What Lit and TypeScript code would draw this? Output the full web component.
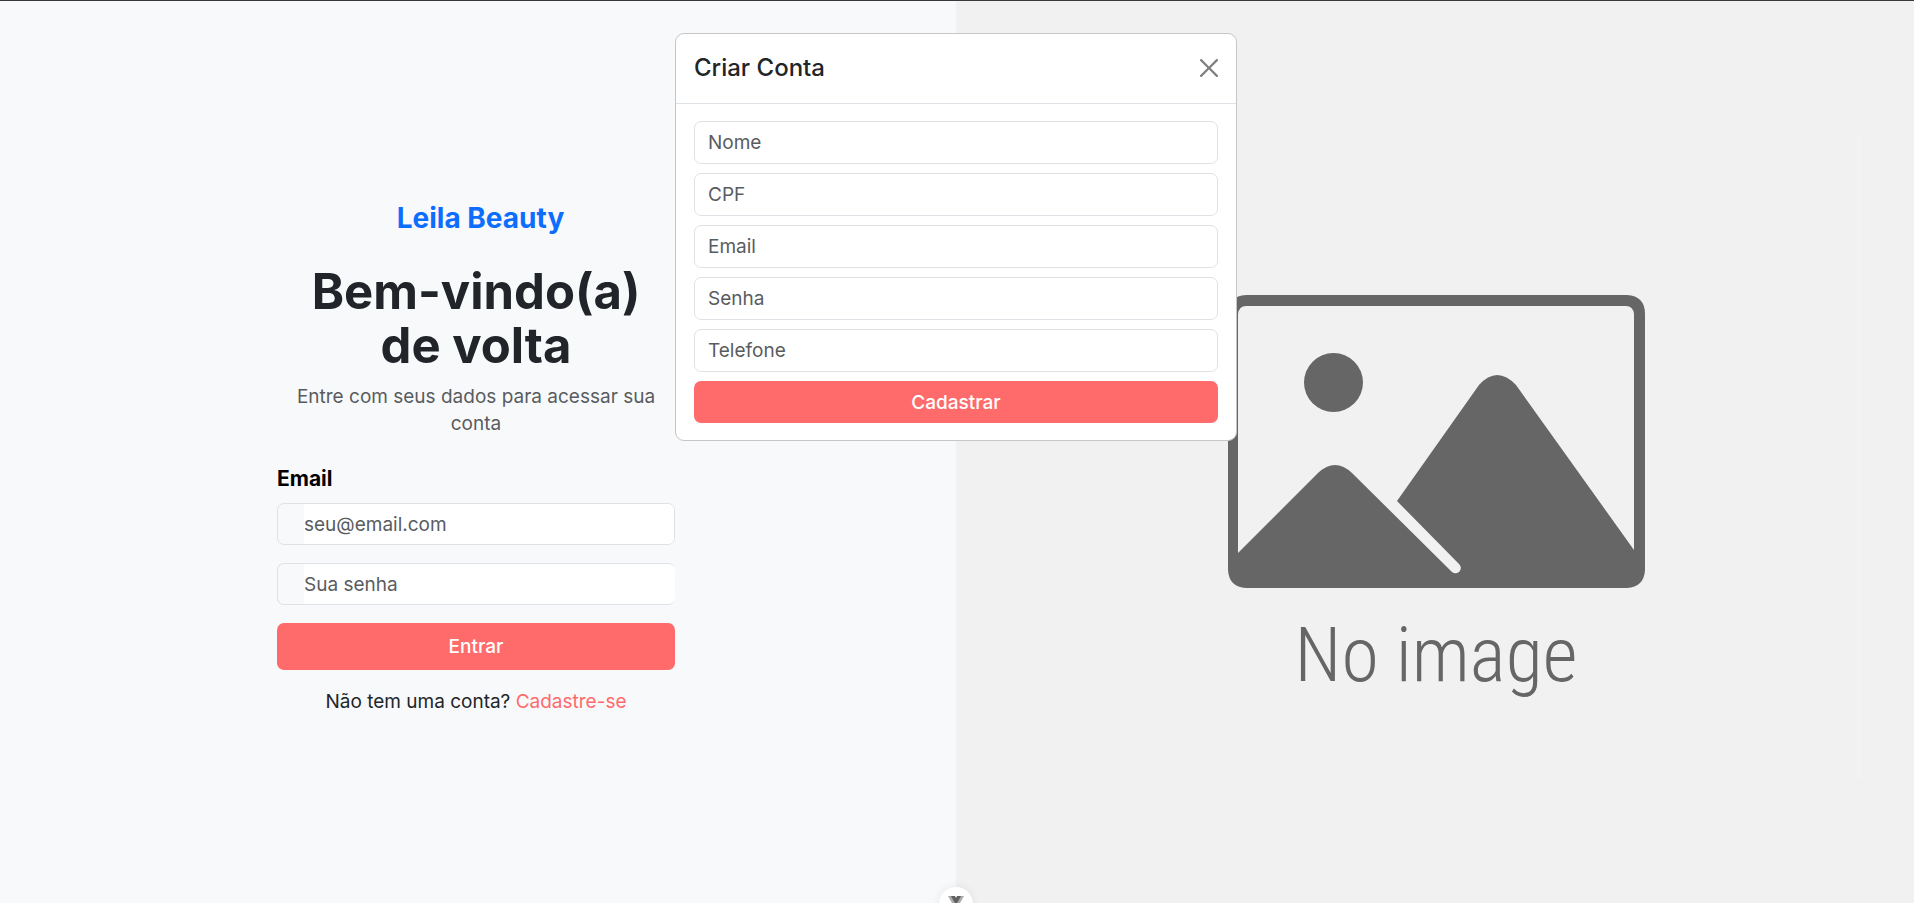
import { LitElement, html, css } from "lit";
import { customElement, state } from "lit/decorators.js";

interface Field {
  name: string;
  label: string;
  type: string;
}

const SIGNUP_FIELDS: Field[] = [
  { name: "nome", label: "Nome", type: "text" },
  { name: "cpf", label: "CPF", type: "text" },
  { name: "email", label: "Email", type: "email" },
  { name: "senha", label: "Senha", type: "password" },
  { name: "telefone", label: "Telefone", type: "tel" },
];

@customElement("no-image")
export class NoImage extends LitElement {
  static styles = css`
    :host {
      display: block;
      background: #f1f1f1;
      overflow: hidden;
    }
    svg {
      display: block;
      width: 100%;
      height: 100%;
    }
    .caption {
      font-family: "Roboto Condensed", "Liberation Sans", sans-serif;
      font-size: 76px;
      font-weight: 300;
      text-anchor: middle;
    }
  `;

  render() {
    return html`
      <svg viewBox="0 0 958 902" preserveAspectRatio="xMidYMid slice" role="img" aria-label="No image">
        <rect x="901" y="136" width="4" height="641" fill="#f3f3f3" />
        <g fill="#666">
          <path
            fill-rule="evenodd"
            d="M290 294H671Q689 295 689 313V569Q688 586 671 587H290Q273 586 272 569V313Q272 295 290 294ZM290 305Q283 305 282 313V552L362 472Q379 456 396 472L496 571A5 5 0 0 0 503 563L441 500L523 384Q541 364 560 384L678 549V313Q677 305 670 305Z"
          />
          <circle cx="377.500" cy="381.500" r="29.500" />
          <text class="caption" x="480" y="680">No image</text>
        </g>
      </svg>
    `;
  }
}

@customElement("signup-dialog")
export class SignupDialog extends LitElement {
  static styles = css`
    :host {
      display: block;
    }
    .dialog {
      box-sizing: border-box;
      background: #fff;
      border: 1px solid #c4c6c8;
      border-radius: 9px;
      overflow: hidden;
    }
    .head {
      display: flex;
      align-items: center;
      justify-content: space-between;
      padding: 17px 18px 19px;
      border-bottom: 1px solid #dee2e6;
    }
    h2 {
      margin: 0;
      font-size: 24px;
      font-weight: 500;
      line-height: 33px;
    }
    .close {
      display: flex;
      padding: 0;
      border: 0;
      background: none;
      color: #808080;
      cursor: pointer;
    }
    .fields {
      display: grid;
      gap: 9px;
      padding: 17px 18px;
    }
    input,
    .submit {
      box-sizing: border-box;
      width: 100%;
      font-family: inherit;
      font-size: 19px;
      border-radius: 7px;
    }
    input {
      height: 43px;
      padding: 0 13px;
      border: 1px solid #dee2e6;
      background: #fff;
      color: #212529;
    }
    input::placeholder {
      color: #595c5f;
      opacity: 1;
    }
    .submit {
      height: 42px;
      padding: 0;
      border: 0;
      background: #ff6b6b;
      color: #fff;
      font-weight: 500;
      cursor: pointer;
    }
  `;

  private close() {
    this.dispatchEvent(new CustomEvent("dismiss"));
  }

  render() {
    return html`
      <section class="dialog" role="dialog" aria-labelledby="title">
        <header class="head">
          <h2 id="title">Criar Conta</h2>
          <button class="close" type="button" aria-label="Fechar" @click=${this.close}>
            <svg width="18" height="18" viewBox="0 0 16 16" fill="currentColor" aria-hidden="true">
              <path
                d="M.293.293a1 1 0 0 1 1.414 0L8 6.586 14.293.293a1 1 0 1 1 1.414 1.414L9.414 8l6.293 6.293a1 1 0 0 1-1.414 1.414L8 9.414l-6.293 6.293a1 1 0 0 1-1.414-1.414L6.586 8 .293 1.707a1 1 0 0 1 0-1.414z"
              />
            </svg>
          </button>
        </header>
        <form class="fields" @submit=${(e: Event) => e.preventDefault()}>
          ${SIGNUP_FIELDS.map(
            (f) => html`<input type=${f.type} name=${f.name} placeholder=${f.label} aria-label=${f.label} />`
          )}
          <button class="submit" type="submit">Cadastrar</button>
        </form>
      </section>
    `;
  }
}

@customElement("login-form")
export class LoginForm extends LitElement {
  static styles = css`
    :host {
      display: block;
      text-align: center;
    }
    .brand {
      margin: 0 0 27px;
      padding-left: 9px;
      color: #0d6efd;
      font-size: 28px;
      font-weight: 700;
      line-height: 40px;
    }
    h1 {
      margin: 0 0 10px;
      font-size: 49px;
      font-weight: 700;
      line-height: 54px;
    }
    .lead {
      margin: 0 0 27px;
      padding: 0 9px;
      color: #595c5f;
      font-size: 19px;
      line-height: 27px;
    }
    form {
      display: grid;
      gap: 18px;
    }
    .field {
      display: grid;
      gap: 9px;
      text-align: left;
    }
    label {
      color: #000;
      font-size: 21px;
      font-weight: 700;
      line-height: 30px;
    }
    .group {
      box-sizing: border-box;
      display: flex;
      height: 42px;
      border: 1px solid #dee2e6;
      border-radius: 7px;
      overflow: hidden;
    }
    .open-end {
      border-right: 0;
    }
    .addon {
      flex: 0 0 26px;
    }
    input {
      flex: 1;
      min-width: 0;
      padding: 0;
      border: 0;
      background: #fff;
      color: #212529;
      font-family: inherit;
      font-size: 19px;
    }
    input::placeholder {
      color: #595c5f;
      opacity: 1;
    }
    .submit {
      height: 47px;
      padding: 0;
      border: 0;
      border-radius: 7px;
      background: #ff6b6b;
      color: #fff;
      font-family: inherit;
      font-size: 19px;
      font-weight: 500;
      cursor: pointer;
    }
    .signup {
      margin: 18px 0 0;
      font-size: 19px;
      line-height: 27px;
    }
    a {
      color: #ff6b6b;
      text-decoration: none;
    }
  `;

  private openSignup(e: Event) {
    e.preventDefault();
    this.dispatchEvent(new CustomEvent("signup"));
  }

  render() {
    return html`
      <p class="brand">Leila Beauty</p>
      <h1>Bem-vindo(a)<br />de volta</h1>
      <p class="lead">Entre com seus dados para acessar sua conta</p>
      <form @submit=${(e: Event) => e.preventDefault()}>
        <div class="field">
          <label for="email">Email</label>
          <div class="group">
            <span class="addon"></span>
            <input id="email" type="email" placeholder="seu@email.com" />
          </div>
        </div>
        <div class="group open-end">
          <span class="addon"></span>
          <input type="password" placeholder="Sua senha" aria-label="Sua senha" />
        </div>
        <button class="submit" type="submit">Entrar</button>
      </form>
      <p class="signup">Não tem uma conta? <a href="#cadastro" @click=${this.openSignup}>Cadastre-se</a></p>
    `;
  }
}

@customElement("app-root")
export class AppRoot extends LitElement {
  static styles = css`
    :host {
      box-sizing: border-box;
      display: grid;
      grid-template-columns: calc(50% - 1px) 1fr;
      position: relative;
      min-height: 100vh;
      border-top: 1px solid #3a373c;
      overflow: hidden;
      background: #f8f9fa;
      color: #212529;
      font-family: Inter, "Open Sans", sans-serif;
    }
    .login {
      display: flex;
      align-items: center;
      justify-content: center;
      padding: 9px 4px 0 0;
      background: #f8f9fb;
    }
    login-form {
      width: 100%;
      max-width: 398px;
    }
    .art {
      position: relative;
      display: grid;
    }
    no-image {
      min-height: 0;
      height: 100%;
    }
    signup-dialog {
      position: absolute;
      top: 32px;
      left: calc(50% - 282px);
      width: 562px;
    }
    .badge {
      position: absolute;
      bottom: -18px;
      left: calc(50% - 18px);
      display: flex;
      justify-content: center;
      box-sizing: border-box;
      width: 34px;
      height: 34px;
      padding: 9px 0 0;
      border: 0;
      border-radius: 50%;
      background: #fff;
      box-shadow: 0 0 9px rgba(0, 0, 0, 0.08);
    }
  `;

  @state() private dialogOpen = true;

  render() {
    return html`
      <main class="login">
        <login-form @signup=${() => (this.dialogOpen = true)}></login-form>
      </main>
      <div class="art"><no-image></no-image></div>
      <button class="badge" type="button" aria-label="Abrir ferramentas">
        <svg width="16" height="16" viewBox="0 0 16 16" aria-hidden="true">
          <path d="M0 0h5l3 5 3-5h5L8 14z" fill="#aaa" />
          <path d="M3 0h4l1 2 1-2h4L8 9z" fill="#606060" />
        </svg>
      </button>
      ${this.dialogOpen
        ? html`<signup-dialog @dismiss=${() => (this.dialogOpen = false)}></signup-dialog>`
        : null}
    `;
  }
}
